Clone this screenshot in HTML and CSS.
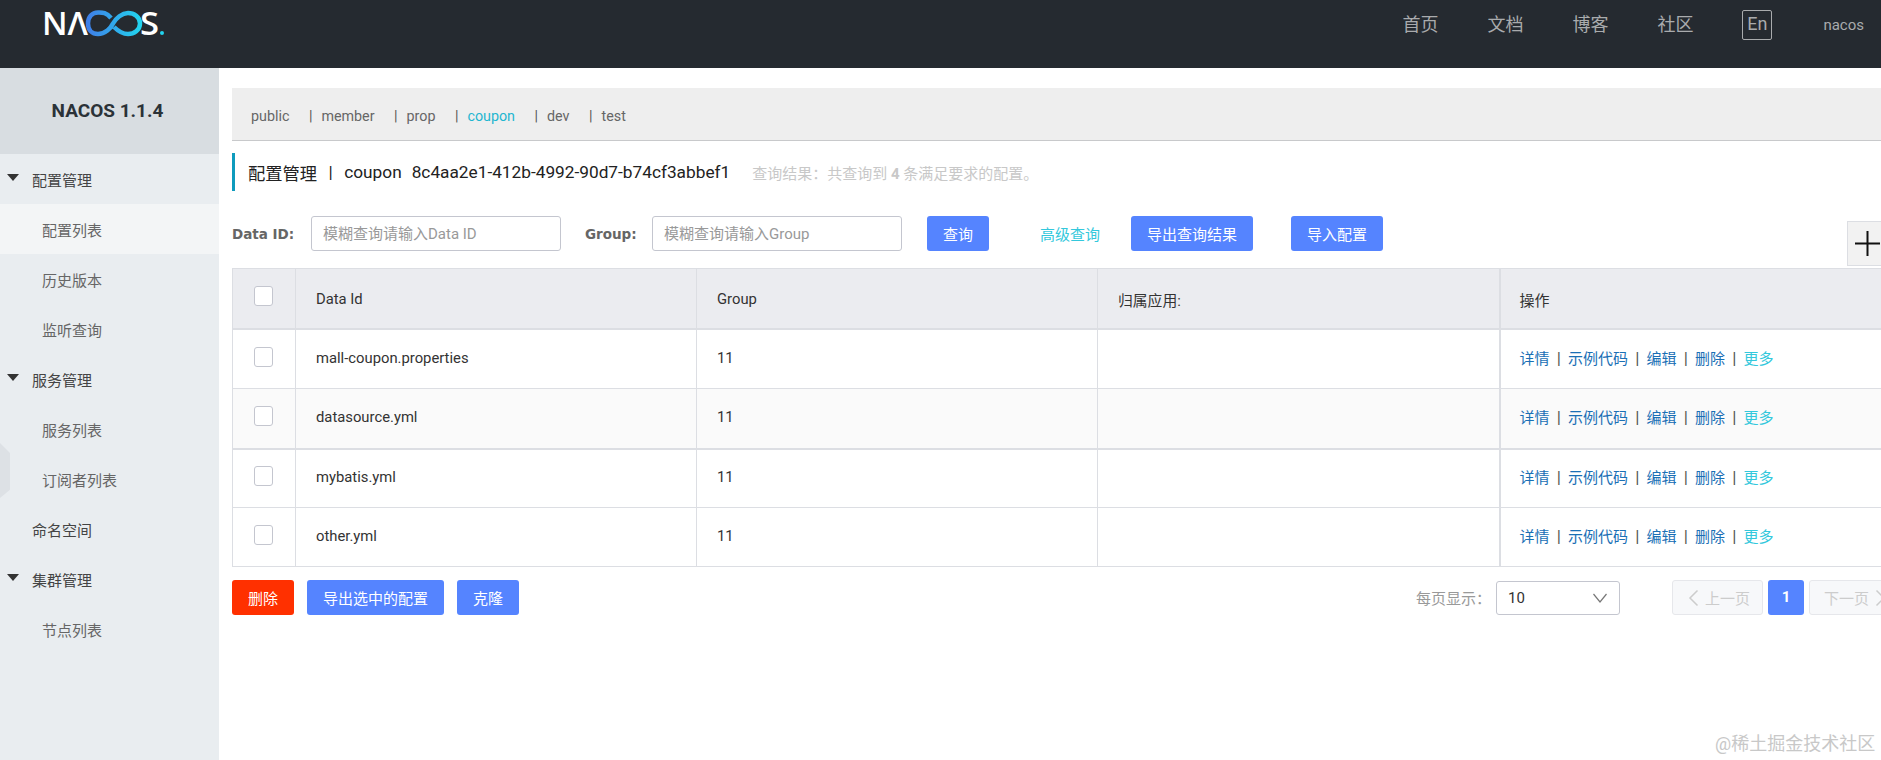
FILE: index.html
```html
<!DOCTYPE html>
<html lang="zh-CN">

<head>
    <meta charset="UTF-8">
    <meta name="viewport" content="width=device-width, initial-scale=1.0">
    <title>Nacos</title>
    <link rel="stylesheet" href="styles.css">
</head>

<body>
    <header class="topbar">
        <svg class="logo" width="130" height="50" viewBox="0 0 130 50" role="img" aria-label="NACOS">
            <defs>
                <linearGradient id="loop" x1="0" y1="0" x2="1" y2="0">
                    <stop offset="0" stop-color="#3f7fe8"></stop>
                    <stop offset="1" stop-color="#22d3ee"></stop>
                </linearGradient>
            </defs>
            <text class="logo-text" x="0" y="35" textLength="46" lengthAdjust="spacingAndGlyphs">NΛ</text>
            <path d="M69 18 C64 12 60 12.500 56 12.500 C50 12.500 46 17 46 23.500 C46 30 50 34 56 34 C63 34 69 28 71 23.500 C74 18 80 13 86 13 C92 13 98 17 98 23.500 C98 30 92 34 86 34 C80 34 76 31 72 27" fill="none" stroke="url(#loop)" stroke-width="4.500"></path>
            <text class="logo-text" x="98" y="35" textLength="19" lengthAdjust="spacingAndGlyphs">S</text>
            <circle cx="120" cy="33" r="2" fill="#22d3ee"></circle>
        </svg>
        <nav class="topnav">
            <a href="#">首页</a>
            <a href="#">文档</a>
            <a href="#">博客</a>
            <a href="#">社区</a>
            <a href="#" class="lang">En</a>
            <a href="#" class="user">nacos</a>
        </nav>
    </header>

    <div class="layout">
        <aside class="sidebar">
            <div class="side-title">NACOS 1.1.4</div>
            <div class="side-group"><i class="arrow"></i>配置管理</div>
            <div class="side-item active">配置列表</div>
            <div class="side-item">历史版本</div>
            <div class="side-item">监听查询</div>
            <div class="side-group"><i class="arrow"></i>服务管理</div>
            <div class="side-item">服务列表</div>
            <div class="side-item">订阅者列表</div>
            <div class="side-group plain">命名空间</div>
            <div class="side-group"><i class="arrow"></i>集群管理</div>
            <div class="side-item">节点列表</div>
            <div class="side-toggle"></div>
        </aside>

        <main class="content">
            <div class="tabs">
                <a href="#" class="tab first">public</a>
                <span class="tab-sep">|</span><a href="#" class="tab">member</a>
                <span class="tab-sep">|</span><a href="#" class="tab">prop</a>
                <span class="tab-sep">|</span><a href="#" class="tab current">coupon</a>
                <span class="tab-sep">|</span><a href="#" class="tab">dev</a>
                <span class="tab-sep">|</span><a href="#" class="tab">test</a>
            </div>

            <div class="page-title">
                <span>配置管理</span>
                <span class="title-sep">|</span>
                <span>coupon</span>
                <span class="title-id">8c4aa2e1-412b-4992-90d7-b74cf3abbef1</span>
                <span class="title-note">查询结果：共查询到 <b>4</b> 条满足要求的配置。</span>
            </div>

            <div class="search">
                <label>Data ID:</label>
                <input class="field" type="text" placeholder="模糊查询请输入Data ID">
                <label class="label-group">Group:</label>
                <input class="field" type="text" placeholder="模糊查询请输入Group">
                <button class="btn btn-query">查询</button>
                <a href="#" class="advanced">高级查询</a>
                <button class="btn btn-export">导出查询结果</button>
                <button class="btn btn-import">导入配置</button>
            </div>

            <table class="grid">
                <colgroup>
                    <col class="col-check">
                    <col class="col-id">
                    <col class="col-group">
                    <col class="col-app">
                    <col>
                </colgroup>
                <thead>
                    <tr>
                        <th><span class="check"></span></th>
                        <th>Data Id</th>
                        <th>Group</th>
                        <th>归属应用:</th>
                        <th class="ops">操作</th>
                    </tr>
                </thead>
                <tbody>
                    <tr>
                        <td><span class="check"></span></td>
                        <td>mall-coupon.properties</td>
                        <td>11</td>
                        <td></td>
                        <td class="ops"><a href="#">详情</a><s>|</s><a href="#">示例代码</a><s>|</s><a href="#">编辑</a><s>|</s><a href="#">删除</a><s>|</s><a href="#" class="more">更多</a></td>
                    </tr>
                    <tr class="hover">
                        <td><span class="check"></span></td>
                        <td>datasource.yml</td>
                        <td>11</td>
                        <td></td>
                        <td class="ops"><a href="#">详情</a><s>|</s><a href="#">示例代码</a><s>|</s><a href="#">编辑</a><s>|</s><a href="#">删除</a><s>|</s><a href="#" class="more">更多</a></td>
                    </tr>
                    <tr>
                        <td><span class="check"></span></td>
                        <td>mybatis.yml</td>
                        <td>11</td>
                        <td></td>
                        <td class="ops"><a href="#">详情</a><s>|</s><a href="#">示例代码</a><s>|</s><a href="#">编辑</a><s>|</s><a href="#">删除</a><s>|</s><a href="#" class="more">更多</a></td>
                    </tr>
                    <tr>
                        <td><span class="check"></span></td>
                        <td>other.yml</td>
                        <td>11</td>
                        <td></td>
                        <td class="ops"><a href="#">详情</a><s>|</s><a href="#">示例代码</a><s>|</s><a href="#">编辑</a><s>|</s><a href="#">删除</a><s>|</s><a href="#" class="more">更多</a></td>
                    </tr>
                </tbody>
            </table>

            <div class="footer-row">
                <button class="btn btn-delete">删除</button>
                <button class="btn btn-selected">导出选中的配置</button>
                <button class="btn btn-clone">克隆</button>
                <div class="pager">
                    <span class="pager-label">每页显示：</span>
                    <div class="page-size">
                        <span>10</span>
                        <svg width="16" height="10" viewBox="0 0 16 10"><path d="M1.500 1 L8 9 L14.500 1" fill="none" stroke="#777" stroke-width="1.200"></path></svg>
                    </div>
                    <div class="page-btn prev">
                        <svg width="11" height="18" viewBox="0 0 11 18"><path d="M9.500 1.500 L2 9 L9.500 16.500" fill="none" stroke="#ccc" stroke-width="1.500"></path></svg>
                        上一页
                    </div>
                    <div class="page-num">1</div>
                    <div class="page-btn next">
                        下一页
                        <svg width="11" height="18" viewBox="0 0 11 18"><path d="M1.500 1.500 L9 9 L1.500 16.500" fill="none" stroke="#ccc" stroke-width="1.500"></path></svg>
                    </div>
                </div>
            </div>
        </main>
    </div>

    <div class="plus-box">
        <svg width="25" height="25" viewBox="0 0 25 25"><path d="M0 12.500 H25 M12.500 0 V25" stroke="#111" stroke-width="2"></path></svg>
    </div>
    <div class="watermark">@稀土掘金技术社区</div>
</body>

</html>
```

FILE: styles.css
```css
/* Global Styles */
html,
body {
    height: 100%;
}

body {
    margin: 0;
    overflow: hidden;
    position: relative;
    background: #fff;
    color: #333;
    font-family: Roboto, "Noto Sans CJK SC", sans-serif;
    font-size: 15px;
}

a {
    text-decoration: none;
    color: inherit;
}

/* Top bar */
.topbar {
    height: 68px;
    display: flex;
    background: #252a30;
}

.logo {
    margin-left: 42px;
    display: block;
}

.logo-text {
    font-family: "Open Sans", sans-serif;
    font-size: 32px;
    font-weight: 600;
    fill: #fff;
}

.topnav {
    margin-left: auto;
    padding: 10px 17px 0 0;
    display: flex;
    align-items: flex-start;
    gap: 49px;
    color: #a9abad;
    font-size: 18px;
    line-height: 30px;
}

.lang {
    width: 28px;
    height: 28px;
    line-height: 26px;
    text-align: center;
    border: 1px solid #a9abad;
    border-radius: 2px;
}

.user {
    font-size: 15px;
    margin-left: 2px;
}

/* Sidebar */
.layout {
    display: flex;
    height: 692px;
}

.sidebar {
    width: 219px;
    flex: none;
    position: relative;
    background: #e9edf0;
}

.side-title {
    height: 86px;
    display: flex;
    align-items: center;
    justify-content: center;
    background: #d8dde1;
    color: #2b3238;
    font-size: 19px;
    font-weight: 700;
    box-sizing: border-box;
    padding: 0 4px 2px 0;
}

.side-group,
.side-item {
    height: 50px;
    box-sizing: border-box;
    display: flex;
    align-items: center;
}

.side-group {
    color: #444;
}

.side-group.plain {
    padding-left: 32px;
}

.side-item {
    padding-left: 42px;
    color: #666;
}

.side-item.active {
    background: #f3f5f6;
}

.arrow {
    width: 0;
    height: 0;
    margin: -4px 13px 0 7px;
    border-left: 6px solid transparent;
    border-right: 6px solid transparent;
    border-top: 7px solid #333;
}

.side-toggle {
    position: absolute;
    left: 0;
    top: 375px;
    width: 10px;
    height: 55px;
    background: #dde1e5;
    clip-path: polygon(0 0, 100% 18%, 100% 85%, 0 100%);
}

/* Main content */
.content {
    flex: 1;
    min-width: 0;
    padding-left: 13px;
    overflow: hidden;
}

.tabs {
    margin-top: 20px;
    height: 52px;
    box-sizing: content-box;
    display: flex;
    align-items: center;
    padding-left: 19px;
    background: #eee;
    border-bottom: 1px solid #c8c9cb;
    color: #666;
    font-size: 14.300px;
}

.tab {
    margin: 4px 19.500px 0 0;
}

.tab.current {
    color: #1fb6d0;
}

.tab-sep {
    margin: 4px 9px 0 0;
    color: #555;
}

.page-title {
    margin-top: 12px;
    height: 38px;
    display: flex;
    align-items: center;
    padding-left: 13px;
    border-left: 3px solid #0f9bbd;
    color: #222;
    font-size: 17.250px;
}

.title-sep {
    margin: 0 11.500px;
}

.title-id {
    margin-left: 10px;
}

.title-note {
    margin-left: 22px;
    color: #c8c8c8;
    font-size: 15px;
}

.search {
    margin-top: 25px;
    height: 35px;
    display: flex;
    align-items: center;
}

.search label {
    width: 79px;
    flex: none;
    color: #666;
    font-family: "DejaVu Sans", sans-serif;
    font-size: 13.500px;
    font-weight: 700;
}

.search .label-group {
    width: 67px;
    margin-left: 24px;
}

.field {
    width: 250px;
    height: 35px;
    box-sizing: border-box;
    padding: 0 11px;
    border: 1px solid #c4c6cf;
    border-radius: 3px;
    font-family: inherit;
    font-size: 15px;
    color: #333;
}

.field::placeholder {
    color: #999;
}

.btn {
    height: 35px;
    border: none;
    border-radius: 3px;
    padding: 0;
    background: #5584ff;
    color: #fff;
    font-family: inherit;
    font-size: 15px;
    flex: none;
}

.btn-query {
    width: 62px;
    margin-left: 25px;
}

.advanced {
    margin-left: 51px;
    color: #33c8dc;
}

.btn-export {
    width: 122px;
    margin-left: 31px;
}

.btn-import {
    width: 92px;
    margin-left: 38px;
}

/* Table */
.grid {
    margin-top: 17px;
    width: 1660px;
    table-layout: fixed;
    border-collapse: collapse;
    color: #333;
    font-size: 14.800px;
}

.col-check {
    width: 63px;
}

.col-id,
.col-group {
    width: 401px;
}

.col-app {
    width: 402px;
}

.grid th,
.grid td {
    height: 59px;
    box-sizing: border-box;
    padding: 0 0 2px 20px;
    border: 1px solid #dcdee3;
    text-align: left;
    font-weight: 400;
}

.grid tbody tr:nth-child(-n+2) td {
    height: 60px;
}

.grid th {
    height: 60px;
    padding: 2px 0 0 20px;
    background: #ebecf0;
    border-bottom-width: 2px;
}

.grid th:first-child,
.grid td:first-child {
    padding: 0 0 4px 21px;
}

.grid .ops {
    padding-left: 19px;
    border-left-width: 2px;
    font-size: 15px;
}

.grid td.ops {
    padding-bottom: 3px;
}

.grid .hover td {
    background: #fafafa;
    border-bottom-width: 2px;
}

.check {
    display: block;
    width: 19px;
    height: 20px;
    box-sizing: border-box;
    background: #fff;
    border: 1px solid #c4c6cf;
    border-radius: 3px;
}

.ops a {
    color: #1a6fb5;
}

.ops a.more {
    color: #33c8dc;
}

.ops s {
    display: inline-block;
    width: 18.500px;
    text-align: center;
    text-decoration: none;
    color: #555;
    font-size: 17px;
    line-height: 1;
}

/* Footer row */
.footer-row {
    margin-top: 13px;
    display: flex;
    align-items: flex-start;
    gap: 13px;
}

.btn-delete {
    width: 62px;
    background: #ff3000;
}

.btn-selected {
    width: 137px;
}

.btn-clone {
    width: 62px;
}

.pager {
    margin-left: auto;
    margin-right: -20px;
    display: flex;
    align-items: center;
    color: #999;
}

.pager-label {
    width: 80px;
}

.page-size {
    width: 124px;
    height: 34px;
    box-sizing: border-box;
    display: flex;
    align-items: center;
    justify-content: space-between;
    padding: 0 11px;
    border: 1px solid #c4c6cf;
    border-radius: 3px;
    color: #333;
}

.page-btn {
    height: 35px;
    box-sizing: border-box;
    display: flex;
    align-items: center;
    gap: 6px;
    background: #f7f8fa;
    border: 1px solid #e6e7eb;
    border-radius: 3px;
    color: #ccc;
}

.prev {
    width: 91px;
    margin-left: 52px;
    padding-left: 15px;
}

.next {
    width: 92px;
    padding-left: 14px;
}

.page-num {
    width: 36px;
    height: 35px;
    margin: 0 5px;
    background: #5584ff;
    border-radius: 3px;
    color: #fff;
    text-align: center;
    line-height: 35px;
    font-weight: 700;
}

/* Floating bits */
.plus-box {
    position: absolute;
    top: 221px;
    left: 1847px;
    width: 44px;
    height: 45px;
    box-sizing: border-box;
    padding: 9px 0 0 7px;
    background: #f2f2f2;
    border: 1px solid #dcdee3;
}

.plus-box svg {
    display: block;
}

.watermark {
    position: absolute;
    top: 732px;
    left: 1715px;
    color: #c8c8c8;
    font-size: 18px;
    line-height: 24px;
    white-space: nowrap;
}
```
